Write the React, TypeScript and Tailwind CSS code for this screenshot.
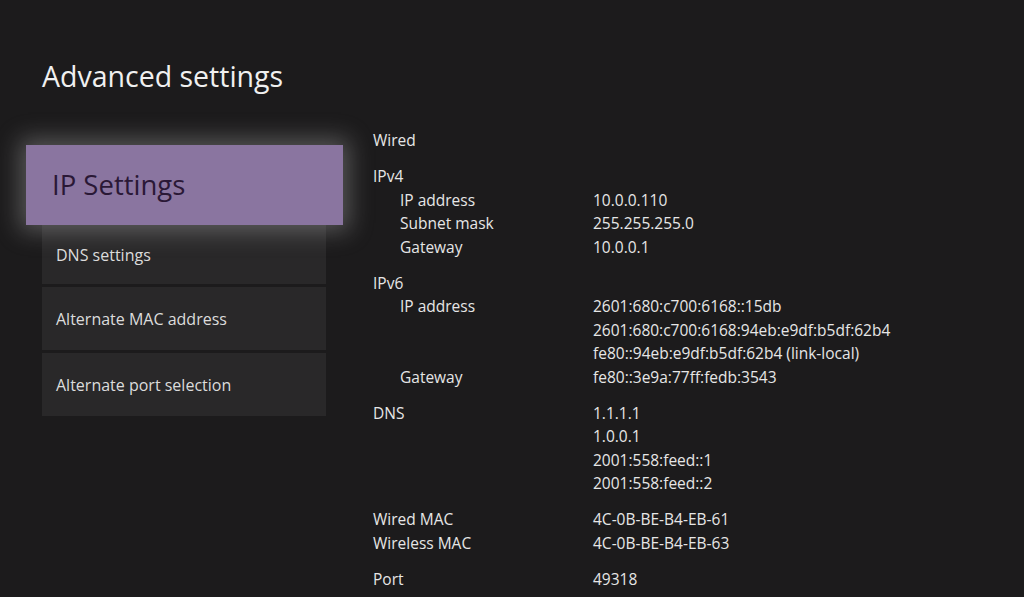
import React from "react";

type Row = { label: string; values: string[]; indent?: boolean };
type Group = { heading?: string; rows: Row[] };

const groups: Group[] = [
  { rows: [{ label: "Wired", values: [] }] },
  {
    heading: "IPv4",
    rows: [
      { label: "IP address", values: ["10.0.0.110"], indent: true },
      { label: "Subnet mask", values: ["255.255.255.0"], indent: true },
      { label: "Gateway", values: ["10.0.0.1"], indent: true },
    ],
  },
  {
    heading: "IPv6",
    rows: [
      {
        label: "IP address",
        values: [
          "2601:680:c700:6168::15db",
          "2601:680:c700:6168:94eb:e9df:b5df:62b4",
          "fe80::94eb:e9df:b5df:62b4 (link-local)",
        ],
        indent: true,
      },
      { label: "Gateway", values: ["fe80::3e9a:77ff:fedb:3543"], indent: true },
    ],
  },
  {
    rows: [
      {
        label: "DNS",
        values: ["1.1.1.1", "1.0.0.1", "2001:558:feed::1", "2001:558:feed::2"],
      },
    ],
  },
  {
    rows: [
      { label: "Wired MAC", values: ["4C-0B-BE-B4-EB-61"] },
      { label: "Wireless MAC", values: ["4C-0B-BE-B4-EB-63"] },
    ],
  },
  { rows: [{ label: "Port", values: ["49318"] }] },
];

export default function App() {
  return (
    <div
      className="w-[1024px] h-[597px] overflow-hidden bg-[#1c1b1c] text-[#e6e6e6]"
      style={{ fontFamily: '"Open Sans", "Noto Sans", sans-serif' }}
    >
      <div className="pl-[42px] pt-[57px] text-[28.5px] leading-[38px] text-[#f0f0f0]">
        Advanced settings
      </div>
      <div className="flex mt-[34px]">
        <div className="w-[373px] shrink-0 pt-[16px] flex flex-col">
          <div className="ml-[26px] w-[317px] h-[80px] bg-[#8a75a0] flex items-center pl-[26px] text-[27.5px] text-[#2a1836] shadow-[0_0_22px_6px_rgba(200,200,200,0.35)] relative z-10">
            IP Settings
          </div>
          <div className="ml-[42px] w-[284px] flex flex-col gap-[3px]">
            {["DNS settings", "Alternate MAC address", "Alternate port selection"].map(
              (t, i) => (
                <div
                  key={t}
                  className={`bg-[#292829] flex items-center pl-[14px] text-[16px] text-[#dcdcdc] ${
                    i === 0 ? "h-[59px]" : "h-[63px]"
                  }`}
                >
                  {t}
                </div>
              )
            )}
          </div>
        </div>
        <div className="flex flex-col gap-[12.5px] text-[15.5px] leading-[23.5px] text-[#e6e6e6]">
          {groups.map((g, gi) => (
            <div key={gi} className="flex flex-col">
              {g.heading && <div>{g.heading}</div>}
              {g.rows.map((r, ri) => (
                <div key={ri} className="flex">
                  <div
                    className={`shrink-0 ${
                      r.indent ? "w-[193px] ml-[27px]" : "w-[220px]"
                    }`}
                  >
                    {r.label}
                  </div>
                  <div className="flex flex-col">
                    {r.values.map((v) => (
                      <div key={v}>{v}</div>
                    ))}
                  </div>
                </div>
              ))}
            </div>
          ))}
        </div>
      </div>
    </div>
  );
}
